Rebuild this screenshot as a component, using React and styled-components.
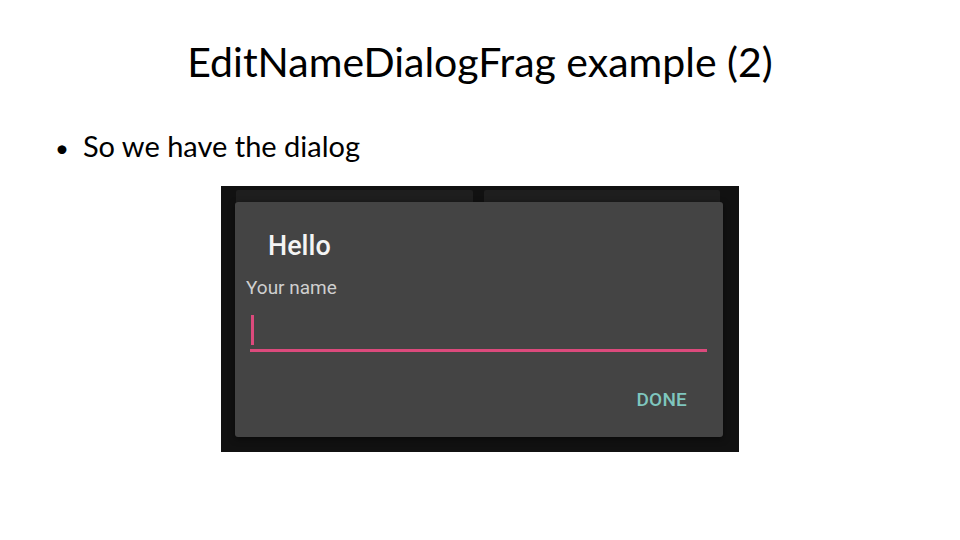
import React from 'react'
import styled, { createGlobalStyle } from 'styled-components'

const GlobalStyle = createGlobalStyle`
  html, body {
    margin: 0;
    padding: 0;
    background: #ffffff;
  }
`

const Slide = styled.div`
  width: 960px;
  height: 540px;
  display: flex;
  flex-direction: column;
  background: #ffffff;
  color: #000000;
  font-family: Lato, "Open Sans", sans-serif;
  overflow: hidden;
`

const SlideTitle = styled.h1`
  margin: 38px 0 0;
  font-size: 41px;
  font-weight: 400;
  line-height: 48px;
  text-align: center;
`

const BulletList = styled.ul`
  list-style: none;
  margin: 42px 0 0;
  padding: 0 0 0 55px;
`

const Bullet = styled.li`
  display: flex;
  align-items: baseline;
  gap: 14px;
  font-size: 29px;
  line-height: 36px;

  &::before {
    content: '•';
    font-size: 24px;
  }
`

const PhoneShot = styled.div`
  align-self: center;
  margin-top: 20px;
  width: 518px;
  height: 266px;
  box-sizing: border-box;
  padding: 4px 16px 15px 14px;
  background: #111111;
  display: flex;
  flex-direction: column;
`

const TileRow = styled.div`
  display: grid;
  grid-template-columns: 237px 236px;
  gap: 11px;
  padding-left: 1px;
  height: 12px;
`

const Tile = styled.div`
  background: #1e1e1e;
  border-radius: 2px 2px 0 0;
`

const Dialog = styled.div`
  flex: 1;
  background: #444444;
  border-radius: 3px;
  box-shadow: 0 2px 6px rgba(0, 0, 0, 0.5);
  display: flex;
  flex-direction: column;
  padding: 0 16px 0 11px;
  font-family: Roboto, "Noto Sans", sans-serif;
`

const DialogTitle = styled.div`
  margin: 27px 0 0 22px;
  font-size: 27px;
  font-weight: 500;
  line-height: 34px;
  color: #f4f4f4;
`

const FieldLabel = styled.div`
  margin-top: 13px;
  font-size: 19px;
  line-height: 24px;
  color: #cfcfcf;
`

const Field = styled.div`
  margin: 19px 0 0 4px;
  height: 33px;
  border-bottom: 3px solid #dc4a7c;
  display: flex;
  align-items: flex-end;
  padding-bottom: 4px;
  box-sizing: border-box;
`

const Cursor = styled.span`
  width: 3px;
  height: 30px;
  margin-left: 1px;
  background: #dc4a7c;
`

const Actions = styled.div`
  display: flex;
  justify-content: flex-end;
  margin-top: 36px;
  padding-right: 20px;
`

const ActionButton = styled.div`
  font-size: 19px;
  font-weight: 500;
  line-height: 24px;
  letter-spacing: 0.2px;
  color: #7fc6be;
`

export default function App() {
  return (
    <>
      <GlobalStyle />
      <Slide>
        <SlideTitle>EditNameDialogFrag example (2)</SlideTitle>
        <BulletList>
          <Bullet>So we have the dialog</Bullet>
        </BulletList>
        <PhoneShot>
          <TileRow>
            <Tile />
            <Tile />
          </TileRow>
          <Dialog>
            <DialogTitle>Hello</DialogTitle>
            <FieldLabel>Your name</FieldLabel>
            <Field>
              <Cursor />
            </Field>
            <Actions>
              <ActionButton>DONE</ActionButton>
            </Actions>
          </Dialog>
        </PhoneShot>
      </Slide>
    </>
  )
}
